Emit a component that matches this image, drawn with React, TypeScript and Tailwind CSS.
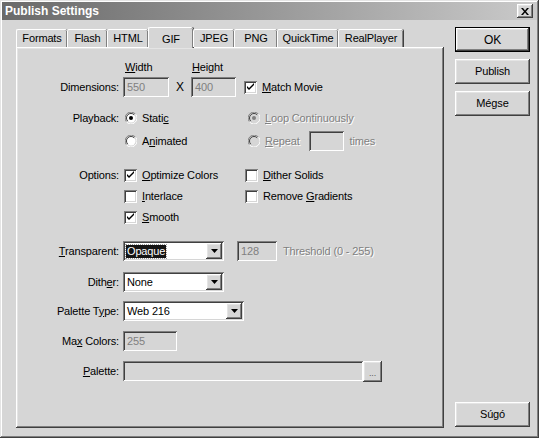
import type { ReactNode } from "react";

const raised = "shadow-[inset_-1px_-1px_#404040,inset_1px_1px_#ffffff,inset_-2px_-2px_#808080,inset_2px_2px_#e4e4e4]";
const sunken = "shadow-[inset_1px_1px_#808080,inset_-1px_-1px_#ffffff,inset_2px_2px_#404040,inset_-2px_-2px_#d6d6d6]";
const dis = "text-[#808080] [text-shadow:1px_1px_0_#ffffff]";

function U({ children }: { children: ReactNode }) {
  return <span className="underline underline-offset-[1px]">{children}</span>;
}

function Check({ on, label }: { on?: boolean; label: ReactNode }) {
  return (
    <div className="flex items-center">
      <div className={`relative h-[13px] w-[13px] bg-white ${sunken}`}>
        {on ? (
          <svg className="absolute left-0 top-0" width="13" height="13" viewBox="0 0 13 13">
            <path d="M3 5v2l2 2 5-5V2L5 7z" fill="#000" />
          </svg>
        ) : null}
      </div>
      <span className="ml-[5px]">{label}</span>
    </div>
  );
}

function Radio({ on, disabled, label }: { on?: boolean; disabled?: boolean; label: ReactNode }) {
  return (
    <div className="flex items-center">
      <svg width="12" height="12" viewBox="0 0 12 12">
        <path d="M10.5 2.2A5.5 5.5 0 0 0 1.5 9.8" stroke="#808080" strokeWidth="1" fill="none" />
        <path d="M9.8 10.5A5.5 5.5 0 0 0 10.5 2.2" stroke="#ffffff" strokeWidth="1" fill="none" />
        <path d="M1.5 9.8A5.5 5.5 0 0 0 9.8 10.5" stroke="#ffffff" strokeWidth="1" fill="none" />
        <circle cx="6" cy="6" r="4.5" fill={disabled ? "#d6d6d6" : "#ffffff"} />
        <path d="M9.2 2.8A4.5 4.5 0 0 0 2.8 9.2" stroke="#404040" strokeWidth="1" fill="none" />
        {on ? <circle cx="6" cy="6" r="2" fill={disabled ? "#808080" : "#000000"} /> : null}
      </svg>
      <span className={`ml-[5px] ${disabled ? dis : ""}`}>{label}</span>
    </div>
  );
}

function Field({ w, h = "h-[20px]", value }: { w: string; h?: string; value?: string }) {
  return (
    <div className={`${w} ${h} bg-[#d6d6d6] ${sunken} flex items-center pl-[4px] text-[#808080]`}>
      {value}
    </div>
  );
}

function Select({ w, value, focused }: { w: string; value: string; focused?: boolean }) {
  return (
    <div className={`${w} h-[20px] bg-white ${sunken} flex items-center justify-between p-[2px]`}>
      {focused ? (
        <span className="ml-[1px] bg-[#141414] px-[1px] leading-[13px] text-white outline-1 outline-dotted outline-[#999]">
          {value}
        </span>
      ) : (
        <span className="ml-[2px]">{value}</span>
      )}
      <div className={`flex h-[16px] w-[16px] items-center justify-center bg-[#d6d6d6] ${raised}`}>
        <svg width="7" height="4" viewBox="0 0 7 4">
          <path d="M0 0h7L3.5 4z" fill="#000" />
        </svg>
      </div>
    </div>
  );
}

function Row({ label, className, children }: { label?: ReactNode; className: string; children: ReactNode }) {
  return (
    <div className={`flex h-[20px] items-center ${className}`}>
      <div className="w-[103px] text-right">{label}</div>
      <div className="ml-[4px] flex items-center">{children}</div>
    </div>
  );
}

function Btn({ children, def }: { children: ReactNode; def?: boolean }) {
  return def ? (
    <div className="h-[25px] w-[75px] border border-black">
      <div className={`flex h-full w-full items-center justify-center text-[12px] ${raised}`}>{children}</div>
    </div>
  ) : (
    <div className={`flex h-[25px] w-[75px] items-center justify-center ${raised}`}>{children}</div>
  );
}

const tabs = [
  { name: "Formats", w: "w-[51px]" },
  { name: "Flash", w: "w-[40px]" },
  { name: "HTML", w: "w-[41px]" },
  { name: "GIF", w: "w-[45px]" },
  { name: "JPEG", w: "w-[41px]" },
  { name: "PNG", w: "w-[43px]" },
  { name: "QuickTime", w: "w-[61px]" },
  { name: "RealPlayer", w: "w-[65px]" },
];

export default function App() {
  return (
    <div
      className="flex h-[438px] w-[539px] flex-col bg-[#d6d6d6] p-[2px] text-[11px] tracking-[-0.15px] text-black shadow-[inset_-1px_-1px_#404040,inset_1px_1px_#e4e4e4,inset_-2px_-2px_#808080,inset_2px_2px_#ffffff]"
      style={{ fontFamily: '"Liberation Sans", Arial, sans-serif' }}
    >
      <div className="flex h-[18px] items-center justify-between bg-gradient-to-r from-[#6a6a6a] to-[#cacaca] pl-[3px] pr-[4px]">
        <span className="text-[12px] font-bold tracking-normal text-white">Publish Settings</span>
        <div className={`flex h-[14px] w-[16px] items-center justify-center bg-[#d6d6d6] ${raised}`}>
          <svg width="8" height="7" viewBox="0 0 8 7">
            <path d="M0 0h2l2 2.5L6 0h2L5 3.5 8 7H6L4 4.5 2 7H0l3-3.5z" fill="#000" />
          </svg>
        </div>
      </div>

      <div className="flex flex-1">
        <div className="ml-[14px] mt-[6px] flex flex-col">
          <div className="relative z-10 flex h-[21px] items-end">
            {tabs.map((t) =>
              t.name === "GIF" ? (
                <div
                  key={t.name}
                  className={`${t.w} -mb-px flex h-[21px] items-start justify-center rounded-t-[2px] border-l border-t border-white bg-[#d6d6d6] pt-[3px] shadow-[inset_-1px_0_#808080,1px_0_#404040]`}
                >
                  {t.name}
                </div>
              ) : (
                <div
                  key={t.name}
                  className={`${t.w} flex h-[18px] items-center justify-center rounded-t-[2px] border-l border-t border-white shadow-[inset_-1px_0_#808080,1px_0_#404040]`}
                >
                  {t.name}
                </div>
              )
            )}
          </div>

          <div className={`flex h-[381px] w-[428px] flex-col ${raised}`}>
            <div className="ml-[107px] mt-[13px] flex h-[14px] items-center">
              <div className="w-[67px] pl-[2px]"><U>W</U>idth</div>
              <div className="pl-[2px]"><U>H</U>eight</div>
            </div>
            <Row label="Dimensions:" className="mt-[3px]">
              <Field w="w-[46px]" value="550" />
              <span className="mx-[7px] w-[8px] text-[12px] font-light">X</span>
              <Field w="w-[45px]" value="400" />
              <div className="ml-[8px]"><Check on label={<><U>M</U>atch Movie</>} /></div>
            </Row>

            <Row label="Playback:" className="mt-[11px]">
              <div className="w-[122px] pl-[2px]"><Radio on label={<>Stati<U>c</U></>} /></div>
              <div className="pl-[3px]"><Radio on disabled label={<><U>L</U>oop Continuously</>} /></div>
            </Row>
            <Row className="mt-[3px]">
              <div className="w-[122px] pl-[2px]"><Radio label={<>A<U>n</U>imated</>} /></div>
              <div className="flex items-center pl-[3px]">
                <Radio disabled label={<><U>R</U>epeat</>} />
                <div className="ml-[9px]"><Field w="w-[35px]" /></div>
                <span className={`ml-[6px] ${dis}`}>times</span>
              </div>
            </Row>

            <Row label="Options:" className="mt-[14px]">
              <div className="w-[122px] pl-[1px]"><Check on label={<><U>O</U>ptimize Colors</>} /></div>
              <Check label={<><U>D</U>ither Solids</>} />
            </Row>
            <Row className="mt-[1px]">
              <div className="w-[122px] pl-[1px]"><Check label={<><U>I</U>nterlace</>} /></div>
              <Check label={<>Remove <U>G</U>radients</>} />
            </Row>
            <Row className="mt-[1px]">
              <div className="w-[122px] pl-[1px]"><Check on label={<><U>S</U>mooth</>} /></div>
            </Row>

            <Row label={<><U>T</U>ransparent:</>} className="mt-[14px]">
              <Select w="w-[101px]" value="Opaque" focused />
              <div className="ml-[13px]"><Field w="w-[40px]" value="128" /></div>
              <span className={`ml-[6px] ${dis}`}>Threshold (0 - 255)</span>
            </Row>
            <Row label={<>Dith<U>e</U>r:</>} className="mt-[11px]">
              <Select w="w-[101px]" value="None" />
            </Row>
            <Row label={<>Palette T<U>y</U>pe:</>} className="mt-[9px]">
              <Select w="w-[121px]" value="Web 216" />
            </Row>
            <Row label={<>Ma<U>x</U> Colors:</>} className="mt-[10px]">
              <Field w="w-[54px]" value="255" />
            </Row>
            <Row label={<><U>P</U>alette:</>} className="mt-[10px]">
              <Field w="w-[240px]" />
              <div className={`flex h-[21px] w-[19px] items-end justify-center pb-[4px] text-[9px] leading-none text-[#606060] ${raised}`}>
                ...
              </div>
            </Row>
          </div>
        </div>

        <div className="ml-[11px] mt-[7px] flex h-[400px] flex-col">
          <Btn def>OK</Btn>
          <div className="mt-[7px]"><Btn>Publish</Btn></div>
          <div className="mt-[7px]"><Btn>Mégse</Btn></div>
          <div className="mt-auto"><Btn>Súgó</Btn></div>
        </div>
      </div>
    </div>
  );
}
